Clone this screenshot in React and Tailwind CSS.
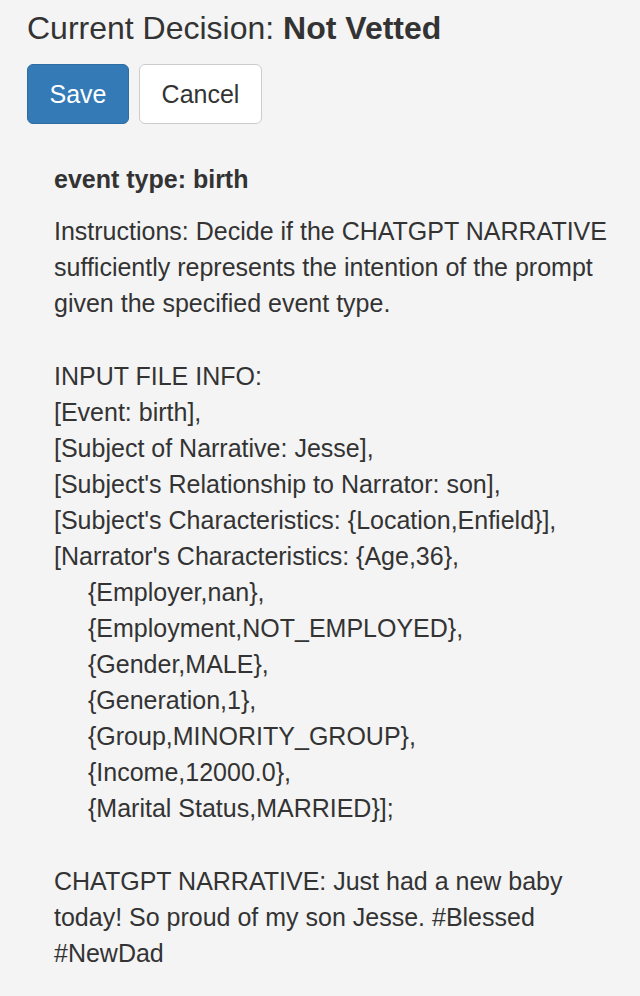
export default function App() {
  const narrator = [
    "{Employer,nan},",
    "{Employment,NOT_EMPLOYED},",
    "{Gender,MALE},",
    "{Generation,1},",
    "{Group,MINORITY_GROUP},",
    "{Income,12000.0},",
    "{Marital Status,MARRIED}];",
  ];

  return (
    <div className="min-h-[996px] w-full bg-[#f4f4f4] text-[#333] font-['Liberation_Sans',Arial,sans-serif]">
      <div className="pl-[27px] pt-[10px]">
        <h4 className="text-[32px] leading-[36px] font-normal">
          Current Decision: <span className="font-bold">Not Vetted</span>
        </h4>

        <div className="mt-[18px] flex gap-[10px]">
          <button className="h-[60px] w-[102px] rounded-[6px] border border-[#2e6da4] bg-[#337ab7] pt-[2px] text-[25px] text-white">
            Save
          </button>
          <button className="h-[60px] w-[123px] rounded-[6px] border border-[#ccc] bg-white pt-[2px] text-[25px] text-[#333]">
            Cancel
          </button>
        </div>
      </div>

      <div className="pl-[54px] pr-[16px] pt-[37px] text-[25px] leading-[36px]">
        <div className="font-bold">event type: birth</div>

        <p className="mt-[16px]">
          Instructions: Decide if the CHATGPT NARRATIVE sufficiently represents the intention of the prompt given the specified event type.
        </p>

        <div className="mt-[37px]">
          <div>INPUT FILE INFO:</div>
          <div>[Event: birth],</div>
          <div>[Subject of Narrative: Jesse],</div>
          <div>[Subject's Relationship to Narrator: son],</div>
          <div>[Subject's Characteristics: {"{"}Location,Enfield{"}"}],</div>
          <div>[Narrator's Characteristics: {"{"}Age,36{"}"},</div>
          {narrator.map((line) => (
            <div key={line} className="pl-[34px]">
              {line}
            </div>
          ))}
        </div>

        <p className="mt-[37px]">
          CHATGPT NARRATIVE: Just had a new baby today! So proud of my son Jesse. #Blessed #NewDad
        </p>
      </div>
    </div>
  );
}
